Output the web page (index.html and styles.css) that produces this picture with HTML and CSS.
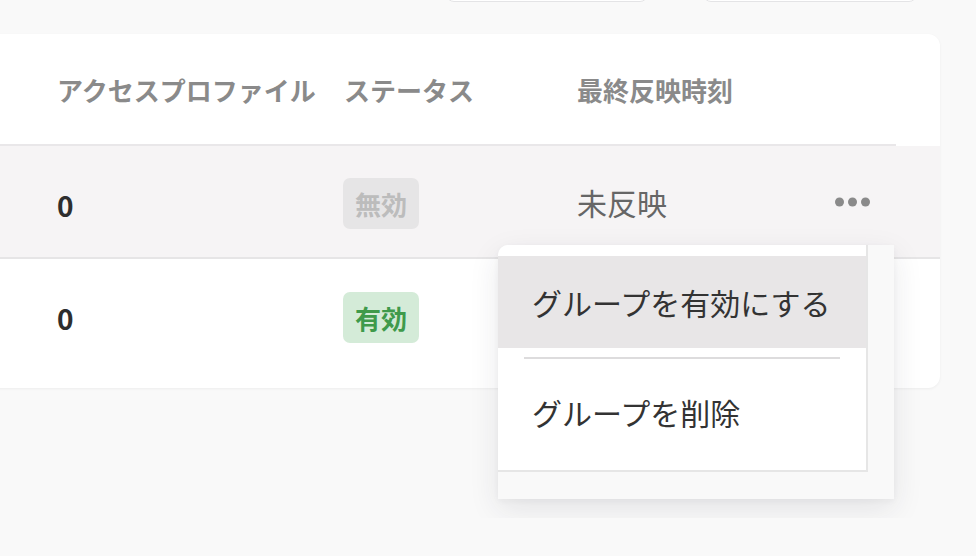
FILE: index.html
```html
<!DOCTYPE html>
<html lang="ja">
<head>
<meta charset="utf-8">
<link rel="stylesheet" href="styles.css">
</head>
<body>
<div class="page">
  <div class="toolbar">
    <button class="tbtn tbtn-a"></button>
    <button class="tbtn tbtn-b"></button>
  </div>
  <div class="card">
    <div class="thead">
      <div class="th">アクセスプロファイル</div>
      <div class="th">ステータス</div>
      <div class="th">最終反映時刻</div>
      <div class="th"></div>
    </div>
    <div class="row row-hover">
      <div class="num">0</div>
      <div class="status"><span class="badge badge-off">無効</span></div>
      <div class="time">未反映</div>
      <div class="actions">
        <svg width="36" height="10" viewBox="0 0 36 10"><circle cx="4.5" cy="5" r="4.5" fill="#8a8a8a"/><circle cx="17.5" cy="5" r="4.5" fill="#8a8a8a"/><circle cx="30.5" cy="5" r="4.5" fill="#8a8a8a"/></svg>
      </div>
    </div>
    <div class="row row-last">
      <div class="num">0</div>
      <div class="status"><span class="badge badge-on">有効</span></div>
      <div class="time"></div>
      <div class="actions"></div>
    </div>
    <div class="popover">
      <div class="menu">
        <div class="item item-active">グループを有効にする</div>
        <div class="divider"></div>
        <div class="item">グループを削除</div>
      </div>
    </div>
  </div>
</div>
</body>
</html>
```
FILE: styles.css
```css
html, body {
  margin: 0;
  padding: 0;
  background: #f9f9f9;
  overflow: hidden;
  font-family: "Noto Sans CJK JP", "Noto Sans", sans-serif;
}
.page {
  width: 976px;
  height: 556px;
}
.toolbar {
  display: flex;
  justify-content: flex-end;
  gap: 55px;
  margin-top: -38px;
  padding-right: 59px;
}
.tbtn {
  height: 40px;
  background: #fff;
  border: 1px solid #e4e4e6;
  border-radius: 8px;
  padding: 0;
}
.tbtn-a { width: 202px; }
.tbtn-b { width: 214px; }
.card {
  position: relative;
  margin-top: 32px;
  margin-left: -40px;
  width: 980px;
  background: #fff;
  border-radius: 0 12px 12px 0;
  box-shadow: 0 1px 3px rgba(0, 0, 0, 0.05);
  padding-bottom: 17px;
}
.thead, .row {
  display: grid;
  grid-template-columns: 287px 233px 258px 1fr;
  align-items: center;
  padding-left: 97px;
}
.thead {
  height: 110px;
  margin-right: 44px;
  border-bottom: 2px solid #e9e7e9;
}
.th {
  font-size: 26px;
  font-weight: 700;
  color: #8a8a8a;
  white-space: nowrap;
}
.row {
  padding-right: 44px;
  height: 111px;
  border-bottom: 2px solid #e6e5e6;
}
.row-last {
  height: 112px;
  border-bottom: none;
}
.row-hover {
  background: #f6f4f5;
}
.num {
  font-size: 28px;
  font-weight: 700;
  color: #2e2e2e;
  padding-top: 6px;
}
.status {
  padding-top: 4px;
}
.badge {
  display: inline-block;
  height: 51px;
  line-height: 51px;
  padding: 0 12px;
  border-radius: 7px;
  font-size: 26px;
  font-weight: 700;
  margin-left: -1px;
}
.badge-off {
  background: #e6e5e6;
  color: #bcbcbc;
}
.badge-on {
  background: #d4ebd8;
  color: #3f9a4b;
}
.time {
  font-size: 30px;
  color: #666;
  white-space: nowrap;
}
.actions {
  display: flex;
  align-items: center;
  height: 10px;
}
.popover {
  position: absolute;
  left: 538px;
  top: 211px;
  width: 396px;
  height: 254px;
  background: #f9f9f9;
  border-radius: 10px 0 0 0;
  box-shadow: 0 10px 30px rgba(40, 40, 60, 0.10), 0 2px 6px rgba(40, 40, 60, 0.04);
  overflow: hidden;
}
.menu {
  width: 368px;
  background: #fff;
  border-right: 2px solid #e6e6e6;
  border-bottom: 2px solid #e6e6e6;
  padding-top: 11px;
  box-sizing: content-box;
  height: 214px;
}
.item {
  height: 92px;
  line-height: 92px;
  padding-left: 34px;
  font-size: 30px;
  color: #333;
  white-space: nowrap;
}
.item-active {
  background: #e8e6e7;
}
.divider {
  height: 2px;
  background: #dddcdd;
  margin: 9px 26px 7px;
}
```
